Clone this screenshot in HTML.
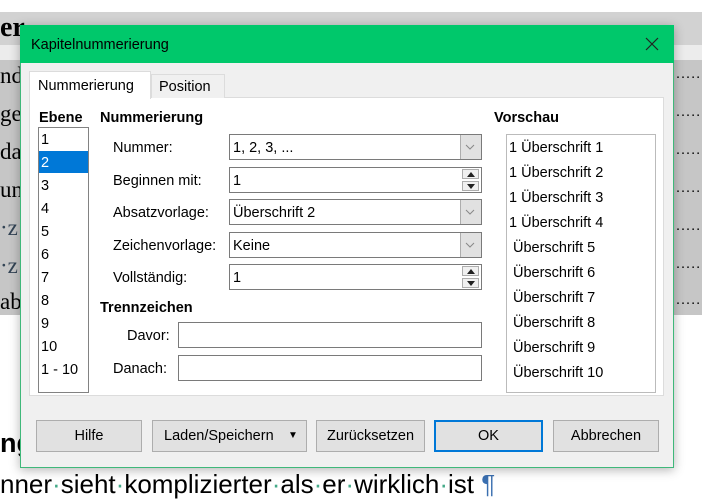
<!DOCTYPE html><html><head><meta charset="utf-8"><style>
body{margin:0;width:702px;height:490px;position:relative;overflow:hidden;background:#fff;font-family:"Liberation Sans",sans-serif;font-size:14.5px;color:#000}
.a{position:absolute}
.t{position:absolute;white-space:nowrap;line-height:16px}
.inp{position:absolute;background:#fff;border:1px solid #7a7a7a;box-sizing:border-box}
.dd{position:absolute;right:0;top:0;bottom:0;width:21px;background:#e1e1e1;border-left:1px solid #adadad;box-sizing:border-box}
.sp{position:absolute;right:2px;width:17px;height:10px;background:#f0f0f0;border:1px solid #adadad;box-sizing:border-box}
.sp svg{position:absolute;left:4px;top:2px}
.btn{position:absolute;top:420px;height:32px;background:#e1e1e1;border:1px solid #adadad;box-sizing:border-box;text-align:center;line-height:30px}
.doc{font-family:"Liberation Serif",serif;font-size:23px;line-height:26px}
</style></head><body>
<div class="a" style="left:0;top:12px;width:702px;height:33px;background:#d2d2d2"></div>
<div class="a" style="left:0;top:60px;width:702px;height:255px;background:#c6c6c6"></div>
<div class="a" style="left:0;top:45px;width:702px;height:15px;background:#ececec"></div>
<div class="t doc" style="left:0;top:12px;font-weight:bold;font-size:28px;line-height:32px">er</div>
<div class="t doc" style="left:0;top:63px">nd</div>
<div class="t doc" style="left:0;top:101px">ge</div>
<div class="t doc" style="left:0;top:139px">das</div>
<div class="t doc" style="left:0;top:177px">un</div>
<div class="t doc" style="left:0;top:215px;color:#345">·z</div>
<div class="t doc" style="left:0;top:253px;color:#345">·z</div>
<div class="t doc" style="left:0;top:289px">abs</div>
<div class="t" style="left:676px;top:66px;letter-spacing:1px">......</div>
<div class="t" style="left:676px;top:104px;letter-spacing:1px">......</div>
<div class="t" style="left:676px;top:142px;letter-spacing:1px">......</div>
<div class="t" style="left:676px;top:180px;letter-spacing:1px">......</div>
<div class="t" style="left:676px;top:218px;letter-spacing:1px">......</div>
<div class="t" style="left:676px;top:256px;letter-spacing:1px">......</div>
<div class="t" style="left:676px;top:292px;letter-spacing:1px">......</div>
<div class="t" style="left:0;top:428px;font-weight:bold;font-size:27px;line-height:30px">ng</div>
<div class="t" style="left:0;top:470px;font-size:26px;line-height:28px">nner<span style="color:#4a8">·</span>sieht<span style="color:#4a8">·</span>komplizierter<span style="color:#4a8">·</span>als<span style="color:#4a8">·</span>er<span style="color:#4a8">·</span>wirklich<span style="color:#4a8">·</span>ist <span style="color:#3a6fb0">¶</span></div>

<div class="a" style="left:20px;top:25px;width:654px;height:443px;background:#f0f0f0;border:1px solid #3fb87a;box-sizing:border-box;box-shadow:0 2px 10px rgba(0,0,0,.3)"></div>
<div class="a" style="left:20px;top:25px;width:654px;height:38px;background:#00c86b"></div>
<div class="t" style="left:31px;top:37px;font-size:14.5px">Kapitelnummerierung</div>
<svg class="a" style="left:645px;top:37px" width="14" height="14"><path d="M1 1L13 13M13 1L1 13" stroke="#222" stroke-width="1.2"/></svg>

<div class="a" style="left:29px;top:97px;width:635px;height:299px;background:#fff;border:1px solid #dcdcdc;box-sizing:border-box"></div>
<div class="a" style="left:151px;top:74px;width:74px;height:24px;background:#f0f0f0;border:1px solid #dcdcdc;border-bottom:none;box-sizing:border-box"></div>
<div class="a" style="left:29px;top:71px;width:122px;height:28px;background:#fff;border:1px solid #dcdcdc;border-bottom:none;box-sizing:border-box"></div>
<div class="t" style="left:38px;top:78px">Nummerierung</div>
<div class="t" style="left:159px;top:79px">Position</div>

<div class="t" style="left:39px;top:110px;font-weight:bold">Ebene</div>
<div class="inp" style="left:38px;top:127px;width:51px;height:266px;border-color:#828282"></div>
<div class="a" style="left:39px;top:151px;width:49px;height:22px;background:#0078d7"></div>
<div class="t" style="left:41px;top:132px">1</div>
<div class="t" style="left:41px;top:155px;color:#fff">2</div>
<div class="t" style="left:41px;top:178px">3</div>
<div class="t" style="left:41px;top:201px">4</div>
<div class="t" style="left:41px;top:224px">5</div>
<div class="t" style="left:41px;top:247px">6</div>
<div class="t" style="left:41px;top:270px">7</div>
<div class="t" style="left:41px;top:293px">8</div>
<div class="t" style="left:41px;top:316px">9</div>
<div class="t" style="left:41px;top:339px">10</div>
<div class="t" style="left:41px;top:362px">1 - 10</div>

<div class="t" style="left:100px;top:110px;font-weight:bold">Nummerierung</div>
<div class="t" style="left:113px;top:140px">Nummer:</div>
<div class="t" style="left:113px;top:173px">Beginnen mit:</div>
<div class="t" style="left:113px;top:205px">Absatzvorlage:</div>
<div class="t" style="left:113px;top:238px">Zeichenvorlage:</div>
<div class="t" style="left:113px;top:270px">Vollständig:</div>

<div class="inp" style="left:229px;top:134px;width:253px;height:26px"><div class="dd"></div><span class="t" style="left:3px;top:5px">1, 2, 3, ...</span></div>
<div class="inp" style="left:229px;top:167px;width:253px;height:26px"><div class="sp" style="top:1px"><svg width="8" height="5"><path d="M0 5L4 0L8 5Z" fill="#222"/></svg></div><div class="sp" style="top:13px"><svg width="8" height="5"><path d="M0 0L4 5L8 0Z" fill="#222"/></svg></div><span class="t" style="left:3px;top:5px">1</span></div>
<div class="inp" style="left:229px;top:199px;width:253px;height:26px"><div class="dd"></div><span class="t" style="left:3px;top:5px">Überschrift 2</span></div>
<div class="inp" style="left:229px;top:232px;width:253px;height:26px"><div class="dd"></div><span class="t" style="left:3px;top:5px">Keine</span></div>
<div class="inp" style="left:229px;top:264px;width:253px;height:26px"><div class="sp" style="top:1px"><svg width="8" height="5"><path d="M0 5L4 0L8 5Z" fill="#222"/></svg></div><div class="sp" style="top:13px"><svg width="8" height="5"><path d="M0 0L4 5L8 0Z" fill="#222"/></svg></div><span class="t" style="left:3px;top:5px">1</span></div>
<svg class="a" style="left:465px;top:144px" width="10" height="6"><path d="M1 1L5 5L9 1" stroke="#888" fill="none"/></svg>
<svg class="a" style="left:465px;top:209px" width="10" height="6"><path d="M1 1L5 5L9 1" stroke="#888" fill="none"/></svg>
<svg class="a" style="left:465px;top:242px" width="10" height="6"><path d="M1 1L5 5L9 1" stroke="#888" fill="none"/></svg>

<div class="t" style="left:100px;top:300px;font-weight:bold">Trennzeichen</div>
<div class="t" style="left:127px;top:328px">Davor:</div>
<div class="t" style="left:113px;top:361px">Danach:</div>
<div class="inp" style="left:178px;top:322px;width:304px;height:26px"></div>
<div class="inp" style="left:178px;top:355px;width:304px;height:26px"></div>

<div class="t" style="left:494px;top:110px;font-weight:bold">Vorschau</div>
<div class="inp" style="left:506px;top:134px;width:150px;height:259px;border-color:#bbb"></div>
<div class="t" style="left:509px;top:140px">1 Überschrift 1</div>
<div class="t" style="left:509px;top:165px">1 Überschrift 2</div>
<div class="t" style="left:509px;top:190px">1 Überschrift 3</div>
<div class="t" style="left:509px;top:215px">1 Überschrift 4</div>
<div class="t" style="left:513px;top:240px">Überschrift 5</div>
<div class="t" style="left:513px;top:265px">Überschrift 6</div>
<div class="t" style="left:513px;top:290px">Überschrift 7</div>
<div class="t" style="left:513px;top:315px">Überschrift 8</div>
<div class="t" style="left:513px;top:340px">Überschrift 9</div>
<div class="t" style="left:513px;top:365px">Überschrift 10</div>

<div class="btn" style="left:36px;width:106px">Hilfe</div>
<div class="btn" style="left:152px;width:155px;text-align:left;padding-left:11px">Laden/Speichern<span style="position:absolute;left:135px;font-size:10px">▼</span></div>
<div class="btn" style="left:316px;width:109px">Zurücksetzen</div>
<div class="btn" style="left:434px;width:109px;border:2px solid #0078d7;line-height:28px">OK</div>
<div class="btn" style="left:553px;width:106px">Abbrechen</div>
</body></html>
